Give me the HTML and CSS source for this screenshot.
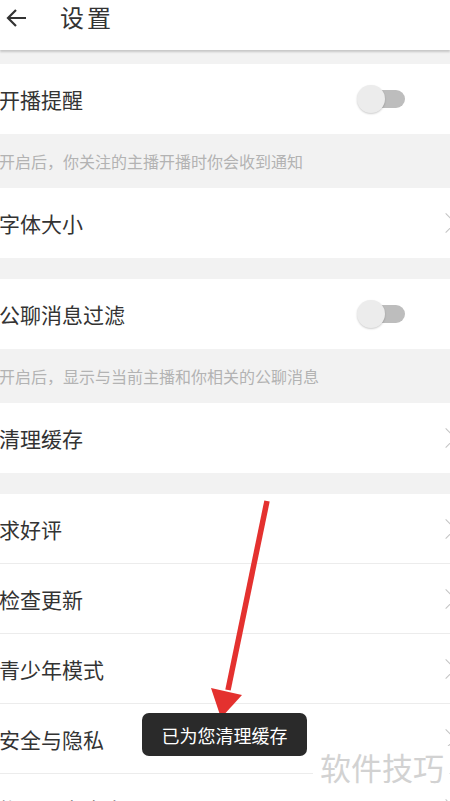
FILE: index.html
```html
<!DOCTYPE html>
<html lang="zh-CN">
<head>
    <meta charset="UTF-8">
    <meta name="viewport" content="width=device-width, initial-scale=1.0">
    <title>设置</title>
    <link rel="stylesheet" href="styles.css">
</head>
<body>

    <!-- Header -->
    <header class="topbar">
        <svg class="back" width="22" height="20" viewBox="0 0 22 20">
            <path d="M21 10H3M11 2L3 10l8 8" fill="none" stroke="#333" stroke-width="2.2"/>
        </svg>
        <h1>设置</h1>
    </header>

    <div class="page">
        <div class="gap small"></div>

        <div class="row">
            <span>开播提醒</span>
            <div class="switch"><div class="knob"></div></div>
        </div>
        <div class="hint">开启后，你关注的主播开播时你会收到通知</div>
        <div class="row">
            <span>字体大小</span>
            <div class="chevron"></div>
        </div>

        <div class="gap"></div>

        <div class="row">
            <span>公聊消息过滤</span>
            <div class="switch"><div class="knob"></div></div>
        </div>
        <div class="hint">开启后，显示与当前主播和你相关的公聊消息</div>
        <div class="row">
            <span>清理缓存</span>
            <div class="chevron"></div>
        </div>

        <div class="gap"></div>

        <div class="row line">
            <span>求好评</span>
            <div class="chevron"></div>
        </div>
        <div class="row line">
            <span>检查更新</span>
            <div class="chevron"></div>
        </div>
        <div class="row line">
            <span>青少年模式</span>
            <div class="chevron"></div>
        </div>
        <div class="row line">
            <span>安全与隐私</span>
            <div class="chevron"></div>
        </div>
        <div class="row line">
            <span>帐号与安全中心</span>
            <div class="chevron"></div>
        </div>
    </div>

    <!-- red marker arrow drawn over the screenshot -->
    <svg class="marker" width="450" height="801" viewBox="0 0 450 801">
        <line x1="267" y1="501" x2="228" y2="690" stroke="#e4312f" stroke-width="5.5"/>
        <polygon points="211,688 242,695 221,718" fill="#e4312f"/>
    </svg>

    <div class="toast">已为您清理缓存</div>
    <div class="watermark">软件技巧</div>

</body>
</html>
```

FILE: styles.css
```css
* {
    margin: 0;
    padding: 0;
    box-sizing: border-box;
}
body {
    font-family: "Noto Sans CJK SC", "Noto Sans", sans-serif;
    background-color: #f2f2f2;
    width: 450px;
    height: 801px;
    overflow: hidden;
    position: relative;
}
.topbar {
    height: 50px;
    background: #fff;
    display: flex;
    align-items: flex-start;
    padding: 1px 0 0 5px;
    box-shadow: 0 2px 2px rgba(0, 0, 0, 0.18);
    position: relative;
    z-index: 2;
}
.topbar .back {
    margin: 7px 33px 0 0;
}
.topbar h1 {
    font-size: 24px;
    line-height: 32px;
    font-weight: normal;
    color: #333;
    letter-spacing: 3px;
}
.gap {
    height: 21px;
}
.gap.small {
    height: 14px;
}
.row {
    height: 70px;
    background: #fff;
    display: flex;
    align-items: center;
    justify-content: space-between;
    font-size: 21px;
    color: #333;
    margin-left: -1px;
}
.row.line {
    border-bottom: 1px solid #ececec;
}
.hint {
    height: 54px;
    display: flex;
    align-items: center;
    font-size: 16px;
    color: #b3b3b3;
    margin-left: -1px;
}
.switch {
    width: 46px;
    height: 18px;
    margin-right: 45px;
    background: #bdbdbd;
    border-radius: 9px;
    position: relative;
}
.knob {
    position: absolute;
    left: -2px;
    top: -5px;
    width: 28px;
    height: 28px;
    border-radius: 50%;
    background: #ececec;
    box-shadow: 0 1px 2px rgba(0, 0, 0, 0.2);
}
.chevron {
    width: 14px;
    height: 14px;
    border-top: 1.5px solid #c4c4c4;
    border-right: 1.5px solid #c4c4c4;
    transform: rotate(45deg);
    margin-right: -3px;
}
.marker {
    position: absolute;
    left: 0;
    top: 0;
}
.toast {
    position: absolute;
    left: 142px;
    top: 713px;
    width: 165px;
    height: 43px;
    background: #2a2a2a;
    border-radius: 7px;
    color: #fff;
    font-size: 18px;
    display: flex;
    align-items: center;
    justify-content: center;
}
.watermark {
    position: absolute;
    left: 313px;
    top: 746px;
    padding: 0 5px 0 7px;
    background: #fff;
    color: #d2d2d2;
    font-size: 31px;
    line-height: 42px;
}
```
